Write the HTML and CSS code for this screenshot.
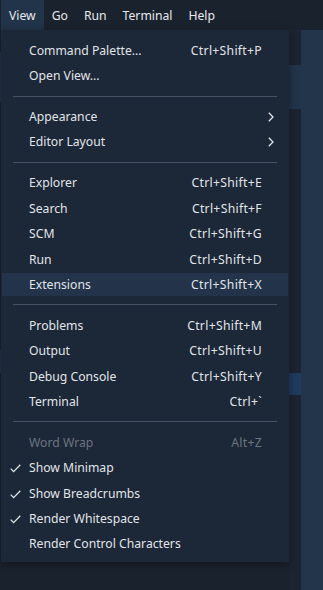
FILE: index.html
```html
<!DOCTYPE html>
<html lang="en">
<head>
    <meta charset="UTF-8">
    <meta name="viewport" content="width=device-width, initial-scale=1.0">
    <title>View Menu</title>
    <link rel="stylesheet" href="styles.css">
</head>
<body>

    <div class="menubar">
        <div class="menubar-item active">View</div>
        <div class="menubar-item">Go</div>
        <div class="menubar-item">Run</div>
        <div class="menubar-item">Terminal</div>
        <div class="menubar-item">Help</div>
    </div>

    <div class="workbench">
        <div class="editor">
            <div class="code">
                <div class="line-hl first"></div>
                <div class="line-hl second"></div>
            </div>
            <div class="scroll">
                <div class="slider"></div>
                <div class="marker"></div>
            </div>
        </div>
        <div class="sidepanel"></div>

        <!-- View dropdown -->
        <div class="menu">
            <div class="item"><span class="label">Command Palette...</span><span class="keys">Ctrl+Shift+P</span></div>
            <div class="item"><span class="label">Open View...</span></div>
            <div class="sep"></div>
            <div class="item"><span class="label">Appearance</span><svg class="chevron" width="6" height="10" viewBox="0 0 6 10"><polyline points="0.8,0.8 5,5 0.8,9.2"/></svg></div>
            <div class="item"><span class="label">Editor Layout</span><svg class="chevron" width="6" height="10" viewBox="0 0 6 10"><polyline points="0.8,0.8 5,5 0.8,9.2"/></svg></div>
            <div class="sep"></div>
            <div class="item"><span class="label">Explorer</span><span class="keys">Ctrl+Shift+E</span></div>
            <div class="item"><span class="label">Search</span><span class="keys">Ctrl+Shift+F</span></div>
            <div class="item"><span class="label">SCM</span><span class="keys">Ctrl+Shift+G</span></div>
            <div class="item"><span class="label">Run</span><span class="keys">Ctrl+Shift+D</span></div>
            <div class="item hover"><span class="label">Extensions</span><span class="keys">Ctrl+Shift+X</span></div>
            <div class="sep"></div>
            <div class="item"><span class="label">Problems</span><span class="keys">Ctrl+Shift+M</span></div>
            <div class="item"><span class="label">Output</span><span class="keys">Ctrl+Shift+U</span></div>
            <div class="item"><span class="label">Debug Console</span><span class="keys">Ctrl+Shift+Y</span></div>
            <div class="item"><span class="label">Terminal</span><span class="keys">Ctrl+`</span></div>
            <div class="sep"></div>
            <div class="item disabled"><span class="label">Word Wrap</span><span class="keys">Alt+Z</span></div>
            <div class="item"><svg class="check" width="11" height="9" viewBox="0 0 11 9"><polyline points="0.7,4.6 3.6,7.6 10.3,0.8"/></svg><span class="label">Show Minimap</span></div>
            <div class="item"><svg class="check" width="11" height="9" viewBox="0 0 11 9"><polyline points="0.7,4.6 3.6,7.6 10.3,0.8"/></svg><span class="label">Show Breadcrumbs</span></div>
            <div class="item"><svg class="check" width="11" height="9" viewBox="0 0 11 9"><polyline points="0.7,4.6 3.6,7.6 10.3,0.8"/></svg><span class="label">Render Whitespace</span></div>
            <div class="item"><span class="label">Render Control Characters</span></div>
        </div>
    </div>

</body>
</html>
```

FILE: styles.css
```css
body {
    margin: 0;
    width: 323px;
    height: 590px;
    overflow: hidden;
    background: #1a222d;
    font-family: "Noto Sans", sans-serif;
    font-size: 12.2px;
    color: #e1e5ea;
}

/* Top menu bar */
.menubar {
    display: flex;
    height: 30px;
    padding-left: 1px;
    background: #1a222d;
}
.menubar-item {
    display: flex;
    align-items: center;
    padding: 0 8px;
    color: #e6e9ed;
}
.menubar-item.active {
    background: #22344a;
}

/* Background workbench */
.workbench {
    position: relative;
    display: flex;
    height: 560px;
}
.editor {
    display: flex;
    width: 301px;
}
.code {
    flex: 1;
    display: flex;
    flex-direction: column;
}
.line-hl {
    background: #22354a;
}
.line-hl.first {
    margin-top: 22px;
    height: 50px;
}
.line-hl.second {
    margin-top: 248px;
    height: 23px;
}
.scroll {
    width: 12px;
    display: flex;
    flex-direction: column;
    background: #1b2430;
}
.slider {
    margin-top: 35px;
    height: 44px;
    background: #22344a;
}
.marker {
    margin-top: 264px;
    height: 22px;
    background: #1f3a5b;
}
.sidepanel {
    flex: 1;
    background: #22354b;
}

/* Dropdown menu */
.menu {
    position: absolute;
    left: 1px;
    top: 0;
    width: 288px;
    box-sizing: border-box;
    display: flex;
    flex-direction: column;
    padding: 7.5px 0 5px;
    background: #1c2737;
    box-shadow: 0 2px 8px rgba(0, 0, 0, 0.35);
}
.item {
    position: relative;
    display: flex;
    align-items: center;
    height: 23px;
    margin: 1.2px 1px;
    padding: 0 26px 0 27px;
}
.item.hover {
    background: #22334a;
}
.item.disabled {
    color: #6c7480;
}
.label {
    flex: 1;
    white-space: nowrap;
}
.keys {
    white-space: nowrap;
    letter-spacing: 0.3px;
}
.sep {
    flex: none;
    height: 1px;
    margin: 7.3px 12px;
    background: #465264;
}
.check {
    position: absolute;
    left: 8px;
    top: 8px;
    fill: none;
    stroke: #e1e5ea;
    stroke-width: 1.3;
}
.chevron {
    position: absolute;
    right: 14px;
    top: 7px;
    fill: none;
    stroke: #e1e5ea;
    stroke-width: 1.3;
}
```
